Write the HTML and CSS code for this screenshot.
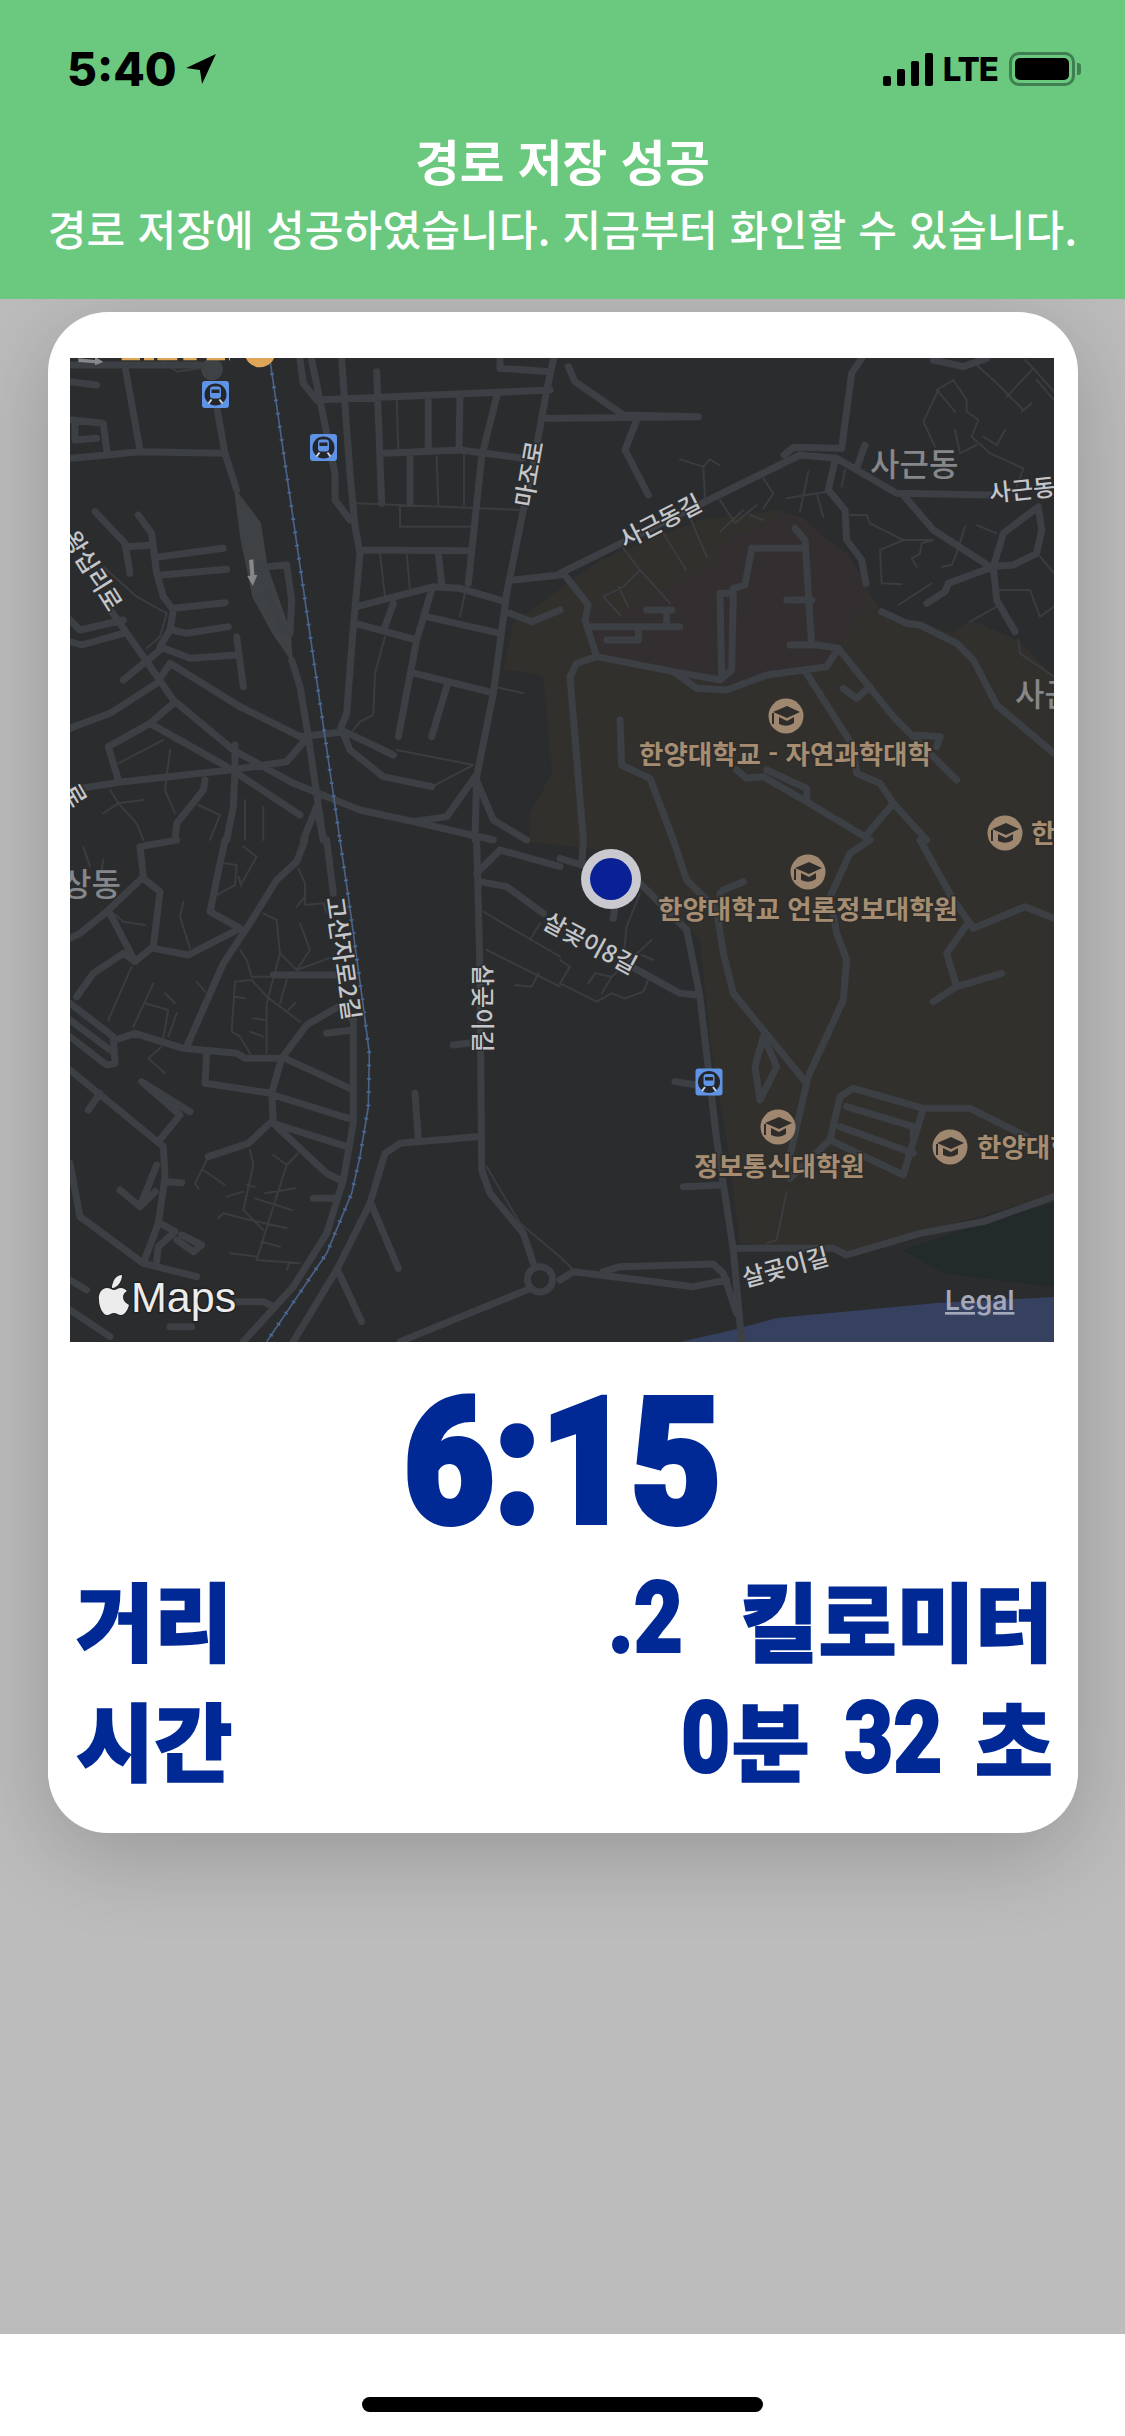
FILE: index.html
```html
<!DOCTYPE html>
<html lang="ko">
<head>
<meta charset="utf-8">
<title>경로 저장 성공</title>
<link rel="stylesheet" href="styles.css">
</head>
<body>
<div class="screen">
  <header class="banner">
    <div class="status">
      <div class="status-left">
        <span class="clock">5:40</span>
        <svg class="loc" viewBox="0 0 30 30"><path d="M29 1 L1 14 L14 16 L16 29 Z"/></svg>
      </div>
      <div class="status-right">
        <svg class="signal" viewBox="0 0 50 33"><rect x="0" y="23" width="8" height="10" rx="2"/><rect x="14" y="16" width="8" height="17" rx="2"/><rect x="28" y="8" width="8" height="25" rx="2"/><rect x="42" y="0" width="8" height="33" rx="2"/></svg>
        <span class="lte">LTE</span>
        <div class="battery"><div class="battery-fill"></div><div class="battery-nub"></div></div>
      </div>
    </div>
    <h1 class="title">경로 저장 성공</h1>
    <p class="subtitle">경로 저장에 성공하였습니다. 지금부터 화인할 수 있습니다.</p>
  </header>

  <main class="overlay">
    <section class="card">
      <svg class="map" viewBox="70 358 984 984" xmlns="http://www.w3.org/2000/svg">
        <defs>
          <g id="cap">
            <circle r="17.5" class="poi-disc"/>
            <path class="poi-ink" d="M-13 -4 L1 -10 L14 -4 L1 2 Z M-7 1 L1 5 L8 1 L8 7 Q1 12 -7 8 Z"/>
            <path class="poi-line" d="M-13 -3 L-13 8"/>
          </g>
          <g id="train">
            <rect x="-13.5" y="-13.5" width="27" height="27" rx="3" class="train-bg"/>
            <circle r="11" class="train-disc"/>
            <rect x="-5.5" y="-8" width="11" height="12" rx="3" class="train-body"/>
            <rect x="-4" y="-5" width="8" height="3.5" class="train-disc"/>
            <path class="train-rail" d="M-4 5 L-7 9 M4 5 L7 9"/>
          </g>
        </defs>
        <rect x="70" y="358" width="984" height="984" class="m-bg"/>
        <path class="m-tan" d="M513 623 L503 670 L533 673 L543 677 L552 773 L530 813 L530 842 L600 850 L642 883 L700 940 L710 1040 L727 1140 L740 1243 L847 1252 L920 1233 L1054 1195 L1054 677 L1018 640 L970 620 L952 633 L882 612 L866 587 L780 510 L700 520 L600 560 Z"/>
        <path class="m-plum" d="M610 617 L717 563 L718 547 L733 532 L760 528 L783 512 L803 518 L827 540 L847 553 L865 583 L860 617 L840 645 L827 667 L767 675 L727 685 L673 672 L597 657 L583 597 Z"/>
        <path class="m-park" d="M1054 1203 L983 1223 L903 1250 L943 1273 L1054 1287 Z"/>
        <path class="m-water" d="M680 1342 L733 1330 L777 1318 L937 1303 L1054 1297 L1054 1342 Z"/>

        <g transform="translate(60 340) scale(.33333)">
          <g class="thin">
            <path d="M320 820 L230 770 L130 680 M320 820 L300 890 L260 925 M890 490 L1390 510 M1020 495 L1020 560 L1230 560 M1010 180 L1015 330 M1130 350 L1135 495 M1212 345 L1212 495 M960 640 L975 770 M1040 640 L1050 750 M1215 760 L1200 830 M975 890 L945 1000 L940 1125 L900 1145 L880 1170 M1010 1230 L1240 1275 L1125 1335 M1305 1040 L1390 1060 M175 1270 L310 1200 M330 1230 L315 1350 L345 1420 M150 1350 L175 1390 L250 1380 M175 1390 L130 1420 M175 1390 L230 1450 L250 1500 M415 1395 L480 1425 L450 1500 M555 1380 L555 1500 M610 1400 L610 1500 M310 65 L350 95 L420 85"/>
          </g>
          <path class="blob" d="M525 450 L600 550 L620 680 L690 880 L695 960 L640 880 L580 770 L545 600 Z"/>
          <circle cx="456" cy="88" r="30" class="blob"/>
          <g class="road">
            <path d="M30 75 L420 75 M195 80 L240 330 M30 355 L140 345 L240 335 L490 340 M470 200 L495 340 L530 450 M695 960 L720 1040 L745 1190 L790 1500 M755 60 L790 230 L825 400 L825 480 L870 540 M845 60 L870 400 L885 560 L900 640 L880 860 L860 1120 L840 1170 M720 60 L730 130 L770 180 L1470 150 M950 95 L965 490 M1105 170 L1105 330 M1200 165 L1197 325 M1310 170 L1265 350 L1225 730 M1480 60 L1460 150 L1430 320 L1390 510 L1340 760 L1300 1060 L1250 1310 L1245 1500 M970 340 L1200 330 L1390 355 M1050 350 L1050 490 M900 630 L1225 632 M1135 640 L1145 730 M890 800 L1120 740 L1200 745 L1335 785 M1000 790 L975 860 M1115 750 L1070 900 L1015 1190 M885 850 L1070 900 M1100 830 L1320 880 M1065 1000 L1285 1055 M1160 1040 L1115 1190 M1360 720 L1500 705 M1350 820 L1415 845 L1500 810 M1460 235 L1500 235 M1320 60 L1320 85 L1470 95 M105 515 L195 610 L210 700 M235 525 L275 580 L290 700 L310 770 L340 810 L330 870 L300 920 M200 620 L275 615 M300 650 L490 625 M305 705 L500 688 M340 805 L495 788 M335 870 L380 880 L505 860 M530 890 L550 1040 M300 920 L390 955 L530 945 M190 1020 L300 930 M130 780 L250 950 L340 1080 L520 1230 L700 1330 L900 1410 L1060 1445 L1300 1500 M30 1165 L150 1120 L290 1030 L330 970 L540 1100 L720 1190 L855 1175 L1000 1245 M270 1150 L340 1090 M145 1220 L270 1150 L500 1280 L720 1425 M145 1220 L175 1320 M30 1350 L190 1325 L510 1290 L680 1265 L745 1190 M525 1215 L525 1290 L520 1400 L500 1500 M435 1320 L430 1350 L350 1450 L345 1500 M850 1180 L870 1230 L970 1310 L1115 1340 M30 840 L60 870 L190 840 M30 905 L65 915 L190 880 M620 680 L680 675 L695 780 L690 880 M620 760 L670 870 M770 1400 L730 1500 M770 1400 L790 1500 M1060 1445 L1160 1430 L1245 1310 L1300 1440 L1400 1500 M30 125 L110 135 M35 240 L130 250 L140 330 M45 240 L45 300 L110 295"/>
          </g>
          <path class="rail" d="M630 60 L840 1500"/>
          <path class="rail-dots" d="M630 60 L840 1500"/>
          <path class="arrow" d="M567 660 L580 658 L583 705 L592 705 L578 738 L562 708 L571 707 Z M55 55 L105 60 L105 50 L130 66 L105 76 L105 70 L55 66 Z"/>
          <path class="orange-scrap" d="M185 57 H510"/>
          <circle cx="600" cy="36" r="46" class="orange-disc"/>
        </g>

        <g transform="translate(560 340) scale(.33333)">
          <g class="thin">
            <path d="M360 358 L430 380 L435 480 M430 380 L450 358 L478 375 M610 415 L640 460 L610 505 M480 480 L525 550 M480 575 L550 510 M525 550 L590 495 M570 525 L610 540 M745 395 L720 515 M680 475 L800 455 M770 460 L790 530 M855 390 L845 440 M870 525 L920 525 L930 550 L1030 600 L960 630 L965 730 L1025 733 M1030 600 L1120 600 L1085 610 L1080 640 L1055 655 L1070 680 M1190 640 L1175 675 L1145 680 M1015 795 L1115 730 M1130 150 L1180 120 L1220 180 L1220 215 L1255 240 L1235 290 L1290 340 L1390 385 L1370 440 M1135 150 L1090 245 L1125 320 M1135 155 L1185 215 M1185 270 L1200 340 M1270 290 L1310 315 L1335 270 M1200 340 L1250 315 M1250 555 L1310 580 M1215 560 L1190 640 M1250 75 L1300 120 L1390 210 M1340 170 L1420 85 L1395 60 M1385 215 L1415 190 M1420 85 L1482 155 M1230 845 L1310 800 M1310 750 L1410 750 L1440 830 L1482 800 M1375 900 L1380 940 L1482 1010 M190 625 L240 690 L330 790 M240 690 L190 740 L130 770 L180 825 M175 740 L205 800 M310 580 L378 690 M385 520 L440 650 M1430 120 L1482 180 M1440 650 L1482 700"/>
          </g>
          <g class="road">
            <path d="M25 80 L45 125 L190 225 L415 230 M0 235 L415 230 M230 240 L195 330 L265 465 M0 700 L720 345 L830 355 L1010 460 L1290 465 M905 55 L875 100 L845 325 L700 322 L672 345 M915 315 L890 385 M825 360 L805 450 L855 510 L860 600 L905 660 L918 730 M1030 465 L1120 570 L1290 680 L1360 675 L1430 640 L1445 570 L1435 500 L1330 580 L1300 680 L1165 730 L1155 755 L1100 790 M1300 680 L1310 780 L1365 875 M965 815 L1040 850 L1080 855 L1190 910 L1240 960 L1310 1095 L1482 1240 M1120 60 L1210 80 L1280 55 M10 700 L85 795 L75 840 L110 950 L340 995 L480 1020 L515 990 L520 760 L480 760 L485 1010 M555 735 L575 625 L725 625 M705 565 L735 600 L755 915 M520 745 L555 735 M755 780 L680 780 M85 860 L360 860 M320 810 L320 860 M260 810 L335 810 M140 900 L235 900 L235 860 M690 915 L770 915 L835 925 L800 980 L620 1005 L500 1050 L410 1045 L340 995 M835 925 L1000 1130 L1190 1320 M740 1000 L880 1220 L890 1300 L960 1330 L1000 1390 L1100 1500 M850 1045 L890 1075 L930 1040 M1070 1185 L1140 1190 L1130 1220 M110 950 L50 970 L30 1010 L70 1500 M180 1140 L185 1275 L270 1315 L340 1500 M530 1290 L560 1315 L610 1310 L740 1385 L915 1490 L1000 1390 M620 1290 L740 1345 L740 1385"/>
          </g>
        </g>

        <g transform="translate(60 840) scale(.33333)">
          <g class="thin">
            <path d="M495 70 L530 75 L525 135 L470 165 M535 110 L545 140 M550 20 L590 50 L545 130 M610 220 L650 240 L660 340 L710 390 L750 330 L720 250 M660 340 L620 490 L620 640 M710 390 L820 350 M575 410 L630 410 M525 425 L515 575 L540 590 L570 640 M525 425 L575 420 L620 470 L720 545 M575 410 L560 360 L540 330 M680 420 L660 490 M705 490 L685 510 M525 470 L555 475 M580 535 L620 540 M570 575 L610 590 M715 85 L735 130 L735 195 L790 190 L800 220 M735 170 L710 200 M370 185 L360 230 L390 325 M160 220 L190 245 L255 255 M215 380 L145 540 M280 430 L220 560 M255 490 L325 510 L305 620 M315 460 L345 490 M350 520 L325 590 M300 625 L265 655 L315 700 M410 425 L435 455 M440 960 L405 1030 L415 1045 M430 990 L495 1035 M640 945 L680 975 L715 940 M680 975 L640 1100 L590 1260 L720 1270 M570 930 L580 975 L550 1110 L610 1170 M500 1070 L550 1055 M560 1035 L585 1040 M615 1060 L705 1045 M585 1075 L695 1110 M530 1130 L680 1165 M475 1135 L490 1120 L530 1130 M605 1205 L660 1220 M510 1240 L590 1250 M690 1265 L680 1290 M1270 215 L1500 350 M1280 330 L1500 440 M1435 400 L1415 440 L1365 435 M1280 980 L1380 1150 L1500 1250 M1410 300 L1440 250 M70 20 L90 80 M130 60 L125 90"/>
          </g>
          <g class="road">
            <path d="M240 20 L250 110 L135 220 L60 280 L30 295 M250 115 L300 155 L280 320 L225 365 L150 220 M280 325 L385 345 L540 265 L450 215 L495 0 M350 0 L240 20 M735 0 L710 65 L650 120 L560 265 L490 370 L380 620 M225 365 L190 340 L100 400 L50 470 M30 490 L160 590 L165 670 L140 675 L30 590 M30 540 L150 630 M165 600 L225 580 L370 625 L530 640 L555 655 L665 655 L740 555 L835 500 M665 655 L635 760 L640 840 L565 910 L445 950 M440 640 L435 730 L635 760 M675 655 L870 745 M640 765 L865 835 M640 850 L860 920 M640 850 L800 1000 L840 1020 M30 690 L310 920 L315 1010 L295 1150 L250 1270 L60 1130 L30 970 M360 825 L295 905 M120 760 L85 810 M360 825 L245 725 L390 815 M290 975 L240 1100 L180 1050 M240 1100 L285 1055 M315 1025 L365 1028 M250 1270 L410 1310 M310 1155 L345 1175 L295 1220 L290 1265 M365 1185 L425 1215 L400 1235 L350 1200 M30 1320 L80 1350 M30 1410 L150 1490 M330 1460 L395 1460 M530 1385 L610 1385 L640 1400 M800 0 L820 160 M835 500 L880 540 L880 850 L850 1020 L800 1180 L700 1340 L550 1505 M800 580 L880 570 M640 405 L830 405 M760 1075 L820 1075 M1065 760 L1075 900 M975 940 L1020 910 L1250 890 M1250 0 L1260 390 L1265 990 L1290 1060 L1390 1180 L1420 1270 M1180 615 L1260 605 M975 940 L930 1090 L830 1290 L700 1505 M935 1095 L1015 1285 M835 1295 L905 1445 M1400 1350 L1020 1505 M1250 100 L1320 30 L1500 80 M1260 125 L1340 140 L1450 220"/>
            <circle cx="1440" cy="1318" r="38"/>
          </g>
          <path class="rail" d="M840 0 L865 170 L910 500 L928 640 L925 800 L900 950 L875 1060 L800 1240 L620 1505"/>
          <path class="rail-dots" d="M840 0 L865 170 L910 500 L928 640 L925 800 L900 950 L875 1060 L800 1240 L620 1505"/>
        </g>

        <g transform="translate(560 840) scale(.33333)">
          <g class="thin">
            <path d="M240 160 L200 260 L185 400 M0 360 L30 380 L0 430 L110 485 L155 460 L195 475 L250 455 L265 420 M85 430 L105 400 L155 410 L125 460 M155 410 L275 300 M245 345 L280 360 M620 1210 L650 1200 L680 1055 M0 1250 L40 1290"/>
          </g>
          <g class="road">
            <path d="M0 55 L65 75 L70 0 M240 130 L380 270 L420 470 L470 900 L520 1230 L545 1505 M340 0 L380 120 L470 210 L490 340 L520 460 L740 730 L680 990 M490 150 L550 125 M480 160 L490 220 M930 0 L870 40 L810 170 L830 280 L860 360 L850 480 L740 720 M1080 0 L1180 180 L1240 265 L1395 200 L1482 235 M1220 255 L1160 340 L1190 440 M1120 485 L1190 440 L1325 400 M215 380 L360 460 L415 465 M345 725 L410 735 M370 1040 L490 1035 M610 590 L585 680 L600 780 L650 680 L610 590 M880 745 L1090 805 L1230 805 L1400 890 M880 745 L840 770 L810 900 L690 1015 M860 800 L1060 860 L1060 890 M840 860 L1060 940 M820 905 L1030 1005 L1090 805 M520 1225 L820 1225 L860 1245 L1080 1180 L1270 1145 L1482 1070 M0 1320 L40 1295 L400 1340 L500 1320 M130 1295 L180 1280 L460 1272 L490 1300 L530 1420 M165 200 L160 235"/>
          </g>
        </g>

        <use href="#train" x="215.5" y="394.5"/>
        <use href="#train" x="323.5" y="447.5"/>
        <use href="#train" x="709" y="1082"/>
        <use href="#cap" x="786" y="716"/>
        <use href="#cap" x="1005" y="833"/>
        <use href="#cap" x="808" y="872"/>
        <use href="#cap" x="778" y="1127"/>
        <use href="#cap" x="950" y="1147"/>

        <text class="lbl-road" transform="translate(62 538) rotate(58)">왕십리로</text>
        <text class="lbl-road" transform="translate(532 508) rotate(-80)">마조로</text>
        <text class="lbl-road" transform="translate(625 549) rotate(-27)">사근동길</text>
        <text class="lbl-road" transform="translate(990 502) rotate(-6)">사근동길</text>
        <text class="lbl-road" transform="translate(326 898) rotate(82)">고산자로2길</text>
        <text class="lbl-road" transform="translate(474 964) rotate(90)">살곶이길</text>
        <text class="lbl-road" transform="translate(541 927) rotate(28)">살곶이8길</text>
        <text class="lbl-road" transform="translate(745 1287) rotate(-15)">살곶이길</text>
        <text class="lbl-road" transform="translate(62 790) rotate(60)">로</text>
        <text class="lbl-area" x="870" y="476">사근동</text>
        <text class="lbl-area" x="1015" y="706">사근동</text>
        <text class="lbl-area" x="62" y="896">상동</text>
        <text class="lbl-poi" x="639" y="764">한양대학교 - 자연과학대학</text>
        <text class="lbl-poi" x="658" y="919">한양대학교 언론정보대학원</text>
        <text class="lbl-poi" x="694" y="1176">정보통신대학원</text>
        <text class="lbl-poi" x="977" y="1157">한양대학교</text>
        <text class="lbl-poi" x="1031" y="843">한양대학교</text>

        <circle cx="611" cy="879" r="30" class="dot-ring"/>
        <circle cx="611" cy="879" r="21" class="dot-core"/>

        <path class="apple" d="M119 1284 C121 1281 122 1278 122 1275 C118 1275 114 1278 113 1283 C112 1285 112 1286 112 1288 C115 1288 117 1286 119 1284 Z M121 1288 C118 1288 116 1290 114 1290 C112 1290 110 1288 107 1288 C102 1288 98 1293 99 1300 C99 1307 103 1315 107 1315 C110 1315 111 1313 114 1313 C117 1313 118 1315 121 1315 C125 1315 128 1309 129 1305 C125 1303 123 1300 123 1297 C123 1294 125 1292 127 1291 C125 1289 123 1288 121 1288 Z"/>
        <text class="maps" x="131" y="1312">Maps</text>
        <text class="legal" x="945" y="1310">Legal</text>
      </svg>

      <div class="time"><span class="time-num">6:15</span></div>
      <div class="stat">
        <span class="ko">거리</span>
        <span class="value"><span class="num w-dot2">.2</span><span class="ko gap">킬로미터</span></span>
      </div>
      <div class="stat">
        <span class="ko">시간</span>
        <span class="value"><span class="num w-zero">0</span><span class="ko gap-xs">분</span><span class="num w-32 gap-s">32</span><span class="ko gap-s">초</span></span>
      </div>
    </section>
  </main>

  <footer class="home"><div class="home-bar"></div></footer>
</div>
</body>
</html>
```

FILE: styles.css
```css
* { box-sizing: border-box; }
html, body { margin: 0; padding: 0; }
body { width: 1125px; height: 2436px; overflow: hidden; font-family: "Noto Sans CJK KR", "Noto Sans", sans-serif; }
.screen { display: flex; flex-direction: column; width: 1125px; height: 2436px; background: #fff; }

.banner { position: relative; z-index: 2; height: 299px; padding-top: 52px; background: #6bc97f; color: #fff; text-align: center; flex: none; }
.status { display: flex; justify-content: space-between; align-items: center; height: 34px; padding: 0 50px 0 67px; color: #000; }
.status-left { display: flex; align-items: center; gap: 8px; }
.clock { font-family: Inter, sans-serif; font-weight: 800; font-size: 46px; line-height: 34px; letter-spacing: 0; }
.loc { width: 32px; height: 32px; fill: #000; }
.status-right { display: flex; align-items: center; }
.signal { width: 50px; height: 33px; fill: #000; margin-right: 10px; }
.lte { font-family: Inter, sans-serif; font-weight: 800; font-size: 33px; line-height: 34px; letter-spacing: -1px; margin-right: 11px; }
.battery { position: relative; width: 66px; height: 34px; border: 3px solid #3f7f52; border-radius: 10px; padding: 3px; }
.battery-fill { width: 100%; height: 100%; background: #000; border-radius: 5px; }
.battery-nub { position: absolute; right: -9px; top: 8px; width: 4px; height: 12px; border-radius: 0 3px 3px 0; background: #3f7f52; }
.title { margin: 0; padding-top: 44px; font-size: 48.5px; line-height: 60px; font-weight: 700; }
.subtitle { margin: 0; padding-top: 11px; font-size: 42px; line-height: 54px; font-weight: 500; white-space: nowrap; letter-spacing: .2px; }

.overlay { flex: 1; background: #bcbcbc; padding: 13px 47px 0 48px; }
.card { background: #fff; height: 1521px; border-radius: 60px; padding: 46px 24px 0 22px; box-shadow: 0 20px 90px rgba(0, 0, 0, .2); }
.map { display: block; width: 984px; height: 984px; }

.m-bg { fill: #2b2c2e; }
.m-tan { fill: #32302d; }
.m-plum { fill: #332e2f; }
.m-park { fill: #232a2a; }
.m-water { fill: #36415f; }
.road path, .road circle { fill: none; stroke: #3c3f43; stroke-width: 21; stroke-linecap: round; stroke-linejoin: round; }
.thin path { fill: none; stroke: #3a3c40; stroke-width: 6; stroke-linecap: round; stroke-linejoin: round; }
.blob { fill: #3f4245; stroke: #3f4245; stroke-width: 6; }
.rail { fill: none; stroke: #4a6288; stroke-width: 5; }
.rail-dots { fill: none; stroke: #4a6a98; stroke-width: 12; stroke-dasharray: 5 35; }
.arrow { fill: #85878a; }
.orange-scrap { fill: none; stroke: #dfa657; stroke-width: 8; stroke-dasharray: 55 12 30 10 60 18 40 30; }
.orange-disc { fill: #dfa657; }

.poi-disc { fill: #a08870; }
.poi-ink { fill: #2e2d2b; }
.poi-line { fill: none; stroke: #2e2d2b; stroke-width: 2; }
.train-bg { fill: #5e93e6; }
.train-disc { fill: #25262a; }
.train-body { fill: #5e93e6; }
.train-rail { fill: none; stroke: #c9d6ea; stroke-width: 2; }

.lbl-road { font-size: 24px; font-weight: 500; fill: #c4c6c9; stroke: #2b2c2e; stroke-width: 3px; paint-order: stroke; }
.lbl-area { font-size: 32px; font-weight: 500; fill: #85878b; }
.lbl-poi { font-size: 26.5px; font-weight: 700; fill: #a68d72; stroke: #2e2d2b; stroke-width: 3px; paint-order: stroke; }
.dot-ring { fill: #c9c9cf; }
.dot-core { fill: #0a2196; }
.apple { fill: #ececec; stroke: #222; stroke-width: 1.5px; paint-order: stroke; }
.maps { font-family: "Liberation Sans", sans-serif; font-size: 43px; fill: #ececec; stroke: #222; stroke-width: 3px; paint-order: stroke; }
.legal { font-family: Inter, sans-serif; font-size: 26.5px; font-weight: 600; fill: #a3a8ba; text-decoration: underline; }

.time { display: flex; justify-content: center; height: 216px; padding-top: 36px; color: #002995; }
.time-num { display: inline-block; font-family: Roboto, "Liberation Sans", sans-serif; font-weight: 900; font-size: 175px; line-height: 170px; -webkit-text-stroke: 6px #002995; transform: scaleX(.89); }
.stat { display: flex; justify-content: space-between; align-items: center; height: 120px; padding: 0 1px 0 6px; color: #002995; }
.value { display: flex; align-items: center; }
.ko { font-family: "Noto Sans CJK KR", sans-serif; font-weight: 900; font-size: 85px; line-height: 100px; -webkit-text-stroke: 1.5px #002995; }
.num { display: inline-block; font-family: Roboto, "Liberation Sans", sans-serif; font-weight: 900; font-size: 100px; line-height: 100px; -webkit-text-stroke: 2px #002995; transform: scaleX(.85); transform-origin: left center; white-space: nowrap; }
.w-dot2 { width: 70px; }
.w-zero { width: 44px; }
.w-32 { width: 97px; }
.gap { margin-left: 62px; }
.gap-xs { margin-left: 7px; }
.gap-s { margin-left: 34px; }

.home { height: 102px; background: #fff; flex: none; position: relative; display: flex; justify-content: center; padding-top: 63px; }
.home-bar { width: 401px; height: 15px; border-radius: 8px; background: #000; }
```
